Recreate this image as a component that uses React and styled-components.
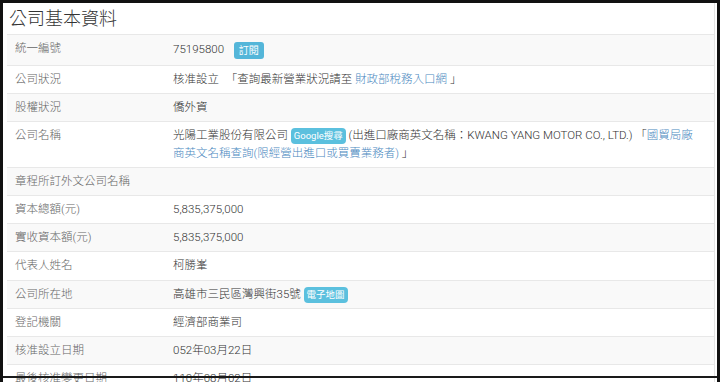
import styled, { createGlobalStyle } from "styled-components";

const GlobalStyle = createGlobalStyle`
    body {
        margin: 0;
        background: #ffffff;
        font-family: "Open Sans", "Noto Sans CJK TC", sans-serif;
    }
`;

const rows = [
    { label: "統一編號", kind: "id" },
    { label: "公司狀況", kind: "status" },
    { label: "股權狀況", value: "僑外資" },
    { label: "公司名稱", kind: "name" },
    { label: "章程所訂外文公司名稱", value: "" },
    { label: "資本總額(元)", value: "5,835,375,000" },
    { label: "實收資本額(元)", value: "5,835,375,000" },
    { label: "代表人姓名", value: "柯勝峯" },
    { label: "公司所在地", kind: "address" },
    { label: "登記機關", value: "經濟部商業司" },
    { label: "核准設立日期", value: "052年03月22日" },
    { label: "最後核准變更日期", value: "110年08月02日" },
];

const renderValue = (row) => {
    if (row.kind === "id") {
        return (
            <>
                75195800 <SubscribeBadge>訂閱</SubscribeBadge>
            </>
        );
    }
    if (row.kind === "status") {
        return (
            <>
                核准設立 <Quote>「</Quote>查詢最新營業狀況請至 <Link>財政部稅務入口網</Link> 」
            </>
        );
    }
    if (row.kind === "name") {
        return (
            <>
                光陽工業股份有限公司 <Badge>Google搜尋</Badge> (出進口廠商英文名稱：KWANG YANG MOTOR CO., LTD.) 「<Link>國貿局廠商英文名稱查詢(限經營出進口或買賣業務者)</Link> 」
            </>
        );
    }
    if (row.kind === "address") {
        return (
            <>
                高雄市三民區灣興街35號 <Badge>電子地圖</Badge>
            </>
        );
    }
    return row.value;
};

const App = () => {
    return (
        <>
            <GlobalStyle />
            <Frame>
                <Panel>
                    <Title>公司基本資料</Title>
                    <Table>
                        <tbody>
                            {rows.map((row, i) => (
                                <Row key={row.label} $striped={i % 2 === 0}>
                                    <LabelCell>{row.label}</LabelCell>
                                    <ValueCell>{renderValue(row)}</ValueCell>
                                </Row>
                            ))}
                        </tbody>
                    </Table>
                </Panel>
            </Frame>
        </>
    );
};

const Frame = styled.div`
    position: relative;
    box-sizing: border-box;
    width: 720px;
    height: 382px;
    border: 3px solid #111;
    border-bottom: none;
    padding: 0 2px 0 4px;
    overflow: hidden;
    background: #ffffff;

    &::after {
        content: "";
        position: absolute;
        left: 0;
        right: 0;
        bottom: 4px;
        height: 2px;
        background: #1a1a1a;
    }
`;

const Panel = styled.div`
    height: 100%;
    border-right: 1px solid #e4e4e4;
`;

const Title = styled.h3`
    margin: 0;
    padding: 0 2px;
    height: 31px;
    line-height: 31px;
    font-size: 18px;
    font-weight: 300;
    color: #333;
`;

const Table = styled.table`
    width: 100%;
    border-collapse: collapse;
    font-family: "Roboto", "Noto Sans CJK TC", sans-serif;
    font-size: 11.5px;
    font-weight: 300;
`;

const Row = styled.tr`
    background: ${(p) => (p.$striped ? "#f9f9f9" : "#ffffff")};
`;

const LabelCell = styled.td`
    width: 142px;
    padding: 5px 8px;
    line-height: 17.2px;
    vertical-align: top;
    color: #666;
    border-top: 1px solid #e8e8e8;
`;

const ValueCell = styled.td`
    padding: 5px 10px 5px 8px;
    line-height: 17.2px;
    vertical-align: top;
    color: #333;
    border-top: 1px solid #e8e8e8;
`;

const Quote = styled.span`
    margin-left: 4px;
`;

const Link = styled.span`
    color: #4a88c0;
`;

const Badge = styled.span`
    display: inline-block;
    padding: 0 3px;
    font-size: 9.5px;
    font-weight: 400;
    line-height: 16px;
    border-radius: 4px;
    background: #5bc0de;
    color: #ffffff;
`;

const SubscribeBadge = styled(Badge)`
    margin: 1.5px 0 1.5px 7px;
    padding: 0 5px;
    font-size: 10px;
    line-height: 17px;
    vertical-align: middle;
    border-radius: 3px;
    background: #54b6d9;
`;

export default App;
